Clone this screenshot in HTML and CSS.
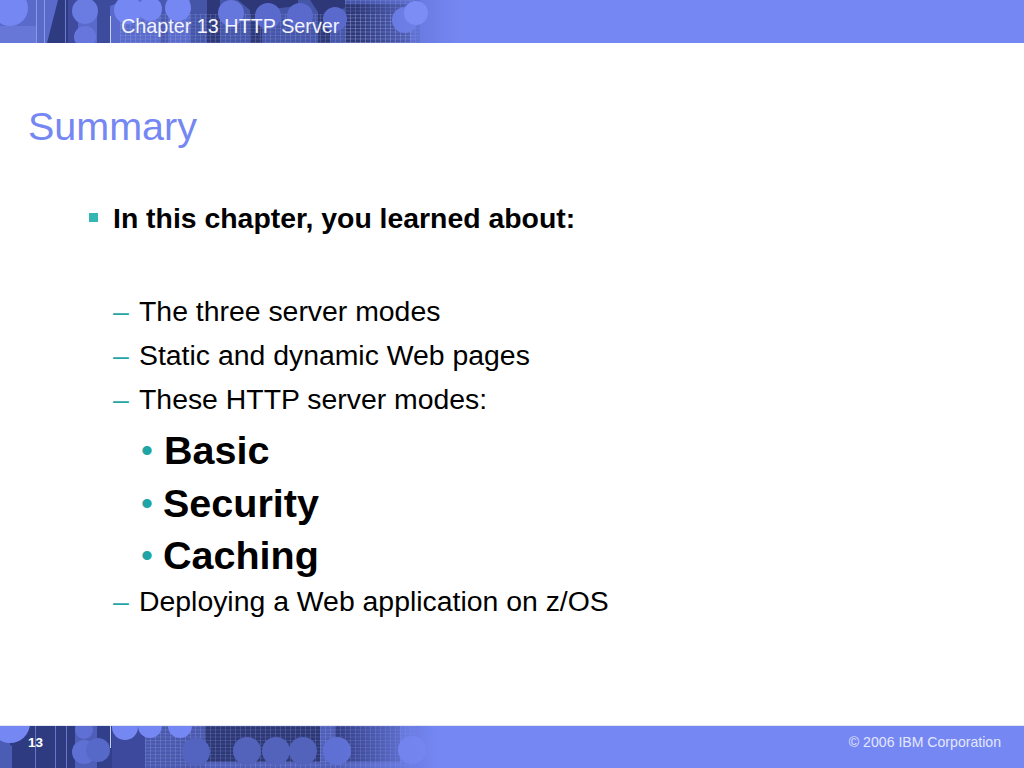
FILE: index.html
```html
<!DOCTYPE html>
<html lang="en">
<head>
<meta charset="utf-8">
<title>Summary</title>
<link rel="stylesheet" href="styles.css">
</head>
<body>
<div class="slide">
  <header class="band band-top">
    <svg class="art" viewBox="0 0 470 43" aria-hidden="true">
      <defs>
        <linearGradient id="fadeT" x1="0" x2="1" y1="0" y2="0">
          <stop offset="0" stop-color="#7587f2" stop-opacity="0"/>
          <stop offset="0.76" stop-color="#7587f2" stop-opacity="0"/>
          <stop offset="0.98" stop-color="#7587f2"/>
        </linearGradient>
        <pattern id="gridT" width="5" height="3.5" patternUnits="userSpaceOnUse">
          <path d="M0 .5H5M.5 0V3.5" stroke="#b4bdf2" stroke-width=".5" fill="none" opacity=".35"/>
        </pattern>
        <filter id="softT" x="0" y="0" width="1" height="1"><feGaussianBlur stdDeviation=".7"/></filter>
      </defs>
      <g filter="url(#softT)">
        <rect width="470" height="43" fill="#5a6bcb"/>
        <rect x="0" y="26" width="36" height="17" fill="#6677d8"/>
        <path d="M47 43L58 0H75V43Z" fill="#2e3a80"/>
        <path d="M68 0H78V43H68Z" fill="#3f4c9f"/>
        <path d="M92 0H118V3L110 6V43H97V6L92 3Z" fill="#3e4b9c"/>
        <path d="M155 0H175L168 8V43H160V8Z" fill="#4a59b0"/>
        <path d="M190 0H420V43H190Z" fill="#4454a8"/>
        <path d="M207 0H220V43H207ZM238 0H298V6L262 10V43H250V10ZM310 0H345V8L330 12V43H318V12ZM345 4H410V43H345Z" fill="#2d3878"/>
        <rect x="120" y="14" width="300" height="29" fill="url(#gridT)"/>
        <rect x="345" y="0" width="70" height="43" fill="url(#gridT)"/>
        <circle cx="10" cy="8" r="18" fill="#7587f2"/>
        <circle cx="85" cy="11" r="13" fill="#6a7be2"/>
        <circle cx="85" cy="37" r="11" fill="#6676dc"/>
        <circle cx="128" cy="10" r="14" fill="#7587f2"/>
        <circle cx="150" cy="9" r="12" fill="#7587f2"/>
        <circle cx="178" cy="8" r="13" fill="#7587f2"/>
        <circle cx="231" cy="13" r="13" fill="#6576dc"/>
        <circle cx="268" cy="16" r="13" fill="#5a6bcc"/>
        <circle cx="300" cy="16" r="13" fill="#5a6bcc"/>
        <circle cx="335" cy="19" r="12" fill="#5a6bcc"/>
        <circle cx="405" cy="20" r="13" fill="#6576dc"/>
        <rect width="470" height="43" fill="url(#fadeT)"/>
        <circle cx="416" cy="13" r="12" fill="#7b8df6"/>
        <rect x="36" y="0" width="1" height="43" fill="#8c99e2"/>
        <rect x="44" y="0" width="1" height="43" fill="#8c99e2"/>
        <rect x="65" y="0" width="1" height="43" fill="#6b7ad0"/>
      </g>
    </svg>
    <span class="rule"></span>
    <span class="chapter">Chapter 13 HTTP Server</span>
  </header>
  <main class="content">
    <h1 class="title">Summary</h1>
    <p class="lead"><span class="sq"></span>In this chapter, you learned about:</p>
    <ul class="dash">
      <li><span class="mark">–</span>The three server modes</li>
      <li><span class="mark">–</span>Static and dynamic Web pages</li>
      <li><span class="mark">–</span>These HTTP server modes:</li>
    </ul>
    <ul class="dot">
      <li><span class="mark">•</span>Basic</li>
      <li><span class="mark">•</span><span class="tight">Security</span></li>
      <li><span class="mark">•</span><span class="tight">Caching</span></li>
    </ul>
    <ul class="dash">
      <li><span class="mark">–</span>Deploying a Web application on z/OS</li>
    </ul>
  </main>
  <footer class="band band-bottom">
    <svg class="art" viewBox="0 0 470 42" aria-hidden="true">
      <defs>
        <linearGradient id="fadeB" x1="0" x2="1" y1="0" y2="0">
          <stop offset="0" stop-color="#7587f2" stop-opacity="0"/>
          <stop offset="0.72" stop-color="#7587f2" stop-opacity="0"/>
          <stop offset="0.93" stop-color="#7587f2"/>
        </linearGradient>
        <pattern id="gridB" width="5" height="3.5" patternUnits="userSpaceOnUse">
          <path d="M0 .5H5M.5 0V3.5" stroke="#b4bdf2" stroke-width=".5" fill="none" opacity=".35"/>
        </pattern>
        <filter id="softB" x="0" y="0" width="1" height="1"><feGaussianBlur stdDeviation=".7"/></filter>
      </defs>
      <g filter="url(#softB)">
        <rect width="470" height="42" fill="#4f5fb8"/>
        <path d="M10 0H75V42H10Z" fill="#2e3a80"/>
        <path d="M97 0H112V42H97Z" fill="#333f8c"/>
        <path d="M112 0H145V42H112Z" fill="#3d4a9c"/>
        <path d="M145 0H205V42H145Z" fill="#4a59ae"/>
        <path d="M205 0H320V36H205Z" fill="#2c3776"/>
        <path d="M335 0H400V36H335Z" fill="#323e86"/>
        <rect x="145" y="0" width="270" height="42" fill="url(#gridB)"/>
        <path d="M0 14L12 20V42H0Z" fill="#4b5bb4"/>
        <circle cx="10" cy="-3" r="20" fill="#7587f2"/>
        <circle cx="84" cy="4" r="9" fill="#5f70d4"/>
        <circle cx="84" cy="26" r="12" fill="#5f70d4"/>
        <circle cx="98" cy="24" r="12" fill="#5768c8"/>
        <circle cx="125" cy="1" r="13" fill="#7587f2"/>
        <circle cx="150" cy="0" r="12" fill="#7587f2"/>
        <circle cx="180" cy="0" r="12" fill="#7587f2"/>
        <circle cx="196" cy="26" r="14" fill="#5364c0"/>
        <circle cx="247" cy="25" r="14" fill="#5263bc"/>
        <circle cx="276" cy="25" r="14" fill="#5263bc"/>
        <circle cx="303" cy="25" r="14" fill="#5263bc"/>
        <circle cx="337" cy="25" r="14" fill="#5f70d4"/>
        <circle cx="412" cy="24" r="14" fill="#6c7de6"/>
        <rect x="35" y="0" width="1" height="42" fill="#6876c8"/>
        <rect x="55" y="0" width="1" height="42" fill="#6876c8"/>
        <rect x="66" y="0" width="1" height="42" fill="#6876c8"/>
        <rect width="470" height="42" fill="url(#fadeB)"/>
      </g>
    </svg>
    <span class="rule rule-short"></span>
    <span class="page">13</span>
    <span class="copy">© 2006 IBM Corporation</span>
  </footer>
</div>
</body>
</html>
```

FILE: styles.css
```css
* { box-sizing: border-box; }
html, body { margin: 0; padding: 0; }
body { width: 1024px; height: 768px; background: #fff; font-family: "Liberation Sans", Arial, sans-serif; overflow: hidden; }
.slide { width: 1024px; height: 768px; display: flex; flex-direction: column; }
.band { position: relative; background: #7587f2; color: #fff; overflow: hidden; flex: none; }
.band-top { height: 43px; }
.band-bottom { height: 43px; display: flex; align-items: center; justify-content: space-between; border-top: 1px solid #e4e7f6; padding: 0 23px 0 28px; }
.art { position: absolute; left: 0; top: 0; width: 470px; height: 100%; }
.rule { position: absolute; left: 110px; top: 16px; width: 1px; height: 27px; background: #c9d0f5; }
.rule-short { top: 0; height: 22px; }
.chapter { position: absolute; left: 121px; top: 15px; font-size: 19.8px; line-height: 22px; color: #f2f4ff; }
.page { position: relative; font-size: 13.5px; font-weight: 700; top: -5px; }
.copy { position: relative; font-size: 14.1px; color: #e3e7ff; top: -5px; }
.content { flex: 1; padding: 60px 0 0 28px; }
.title { margin: 0 0 52px; font-size: 39.5px; line-height: 46px; font-weight: 400; color: #7587f2; }
.lead { margin: 0 0 54px 60px; font-size: 28.4px; line-height: 34px; font-weight: 700; color: #000; padding-left: 25px; position: relative; }
.sq { position: absolute; left: 1px; top: 12px; width: 9px; height: 9px; background: #36b5b5; }
.dash, .dot { list-style: none; margin: 0; padding: 0; }
.dash li { display: flex; font-size: 28.4px; line-height: 44px; margin-left: 85px; color: #000; }
.dash .mark { width: 26px; color: #1fa5a5; }
.dot { margin: 3px 0 -3px; }
.dot li { display: flex; font-size: 39.5px; line-height: 52.5px; font-weight: 700; margin-left: 113px; color: #000; }
.dot .mark { width: 23px; font-weight: 400; font-size: 34px; color: #1fa5a5; }
.tight { margin-left: -1px; }
```
